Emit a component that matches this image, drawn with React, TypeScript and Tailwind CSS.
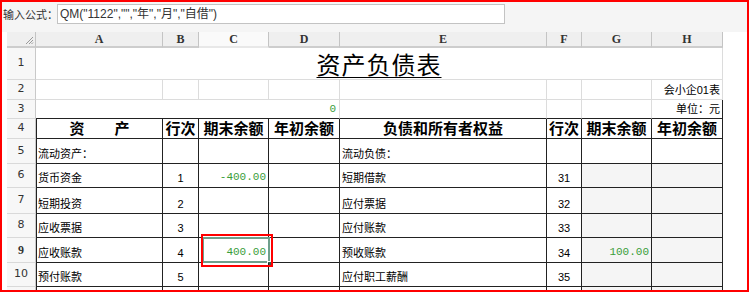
import React from "react";

const cjk = "font-['Liberation_Sans','Noto_Sans_CJK_SC',sans-serif]";
const mono = "font-['Liberation_Mono','Noto_Sans_CJK_SC',monospace]";

type Row = {
  n: number;
  a: string;
  b: string;
  c: string;
  d: string;
  e: string;
  f: string;
  g: string;
  h: string;
};

const body: Row[] = [
  { n: 5, a: "流动资产：", b: "", c: "", d: "", e: "流动负债：", f: "", g: "", h: "" },
  { n: 6, a: "货币资金", b: "1", c: "-400.00", d: "", e: "短期借款", f: "31", g: "", h: "" },
  { n: 7, a: "短期投资", b: "2", c: "", d: "", e: "应付票据", f: "32", g: "", h: "" },
  { n: 8, a: "应收票据", b: "3", c: "", d: "", e: "应付账款", f: "33", g: "", h: "" },
  { n: 9, a: "应收账款", b: "4", c: "400.00", d: "", e: "预收账款", f: "34", g: "100.00", h: "" },
  { n: 10, a: "预付账款", b: "5", c: "", d: "", e: "应付职工薪酬", f: "35", g: "", h: "" },
  { n: 11, a: "", b: "", c: "", d: "", e: "", f: "", g: "", h: "" },
];

const RowHead = ({ n, bold }: { n?: number; bold?: boolean }) => (
  <div
    className={`flex items-center justify-center bg-[#f7f7f7] border-r border-b border-r-[#c9c9c9] border-b-[#d9d9d9] text-[11px] text-[#333] ${
      bold ? "font-bold font-['Liberation_Serif',serif] text-[12px]" : "font-['DejaVu_Sans',sans-serif]"
    }`}
  >
    {n}
  </div>
);

const ColHead = ({ label, active }: { label: string; active?: boolean }) => (
  <div
    className={`flex items-center justify-center border-r border-r-[#c4c4c4] border-b-2 font-['Liberation_Serif',serif] text-[12px] font-semibold text-[#333] ${
      active ? "bg-[#fafafa] border-b-[#e8e8e8]" : "bg-[#efefef] border-b-[#cdcdcd]"
    }`}
  >
    {label}
  </div>
);

const Num = ({ v }: { v: string }) =>
  v ? <span className={`${mono} text-[11px] text-[#3a9d3a]`}>{v}</span> : null;

export default function App() {
  return (
    <div className="w-[750px] h-[295px] bg-white">
      <div className="relative w-[749px] h-[292px] border-2 border-[#ff0000] overflow-hidden bg-white">
        {/* formula bar */}
        <div className="h-[30px] bg-[#f5f5f5] flex items-start pt-[2px]">
          <span className={`${cjk} shrink-0 whitespace-nowrap text-[11px] text-[#333] pl-[1px] pt-[3px] w-[55px]`}>
            输入公式：
          </span>
          <div
            className={`${cjk} w-[448px] h-[20px] bg-white border border-[#c3c3c3] flex items-center pl-[2px] text-[12px] text-[#333]`}
          >
            QM("1122","","年","月","自借")
          </div>
        </div>

        {/* sheet */}
        <div className="pl-[5px]">
          <div className="grid w-[716px] grid-cols-[29px_127px_36px_70px_71px_207px_35px_70px_71px] grid-rows-[16px_32px_20px_19px_20px_25px_24px_26px_24px_25px_24px_24px]">
            {/* column header */}
            <div className="relative bg-[#efefef] border-r border-r-[#c4c4c4] border-b-2 border-b-[#cdcdcd]">
              <svg className="absolute right-[1px] bottom-[1px]" width="9" height="9" viewBox="0 0 9 9">
                <path d="M8 1 L1 8 M8 4 L4 8 M8 6.5 L6.5 8" stroke="#9a9a9a" strokeWidth="1" />
              </svg>
            </div>
            <ColHead label="A" />
            <ColHead label="B" />
            <ColHead label="C" active />
            <ColHead label="D" />
            <ColHead label="E" />
            <ColHead label="F" />
            <ColHead label="G" />
            <ColHead label="H" />

            {/* row 1 title */}
            <RowHead n={1} />
            <div className="col-span-8 flex items-center justify-center border-r border-b border-[#dcdcdc]">
              <span className="font-['Noto_Sans_CJK_SC',serif] text-[24px] leading-none underline underline-offset-[3px] decoration-1 text-black tracking-[1px]">
                资产负债表
              </span>
            </div>

            {/* row 2 */}
            <RowHead n={2} />
            <div className="border-r border-b border-[#dcdcdc]" />
            <div className="border-r border-b border-[#dcdcdc]" />
            <div className="border-r border-b border-[#dcdcdc]" />
            <div className="border-r border-b border-[#dcdcdc]" />
            <div className="border-r border-b border-[#dcdcdc]" />
            <div className="border-r border-b border-[#dcdcdc]" />
            <div className="border-r border-b border-[#dcdcdc]" />
            <div className={`${cjk} border-r border-b border-[#dcdcdc] flex items-end justify-end pr-[2px] pb-[1px] text-[11px] text-black`}>
              会小企01表
            </div>

            {/* row 3 */}
            <RowHead n={3} />
            <div className="col-span-4 border-r border-r-[#dcdcdc] border-b border-b-[#222] flex items-end justify-end pr-[3px] pb-[1px]">
              <Num v="0" />
            </div>
            <div className="border-r border-r-[#dcdcdc] border-b border-b-[#222]" />
            <div className="border-r border-r-[#dcdcdc] border-b border-b-[#222]" />
            <div className="border-r border-r-[#dcdcdc] border-b border-b-[#222]" />
            <div className={`${cjk} border-r border-r-[#222] border-b border-b-[#222] flex items-end justify-end pr-[2px] pb-[1px] text-[11px] text-black`}>
              单位：元
            </div>

            {/* row 4 headings */}
            <RowHead n={4} />
            {["资　　产", "行次", "期末余额", "年初余额", "负债和所有者权益", "行次", "期末余额", "年初余额"].map(
              (t, i) => (
                <div
                  key={i}
                  className={`${cjk} flex items-center justify-center border-r border-b border-[#222] text-[15px] font-bold text-black leading-none ${
                    i === 0 ? "border-l" : ""
                  }`}
                >
                  {t}
                </div>
              )
            )}

            {/* body rows */}
            {body.map((r) => (
              <React.Fragment key={r.n}>
                <RowHead n={r.n < 11 ? r.n : undefined} bold={r.n === 9} />
                <div className={`${cjk} border-l border-r border-b border-[#222] flex items-end pl-[1px] pb-[1px] text-[11px] text-black`}>
                  {r.a}
                </div>
                <div className={`${cjk} border-r border-b border-[#222] flex items-end justify-center pb-[1px] text-[11px] text-black`}>
                  {r.b}
                </div>
                <div className="relative border-r border-b border-[#222] flex items-end justify-end pr-[2px] pb-[2px]">
                  <Num v={r.c} />
                  {r.n === 9 && (
                    <>
                      <div className="absolute left-[3px] top-[-1px] w-[68px] h-[26px] border-2 border-[#6f9f8c]" />
                      <div className="absolute left-[68px] top-[23px] w-[5px] h-[5px] bg-[#3b5a4e] border border-white" />
                      <div className="absolute left-[2px] top-[-4px] w-[72px] h-[33px] border-2 border-[#ff0000] z-10" />
                    </>
                  )}
                </div>
                <div className="border-r border-b border-[#222]" />
                <div className={`${cjk} border-r border-b border-[#222] flex items-end pl-[2px] pb-[1px] text-[11px] text-black`}>
                  {r.e}
                </div>
                <div className={`${cjk} border-r border-b border-[#222] flex items-end justify-center pb-[1px] text-[11px] text-black`}>
                  {r.f}
                </div>
                <div
                  className={`border-r border-b border-[#222] flex items-end justify-end pr-[2px] pb-[2px] ${
                    r.n > 5 ? "bg-[#f5f5f5]" : ""
                  }`}
                >
                  <Num v={r.g} />
                </div>
                <div className={`border-r border-b border-[#222] ${r.n > 5 ? "bg-[#f5f5f5]" : ""}`} />
              </React.Fragment>
            ))}
          </div>
        </div>
      </div>
    </div>
  );
}
